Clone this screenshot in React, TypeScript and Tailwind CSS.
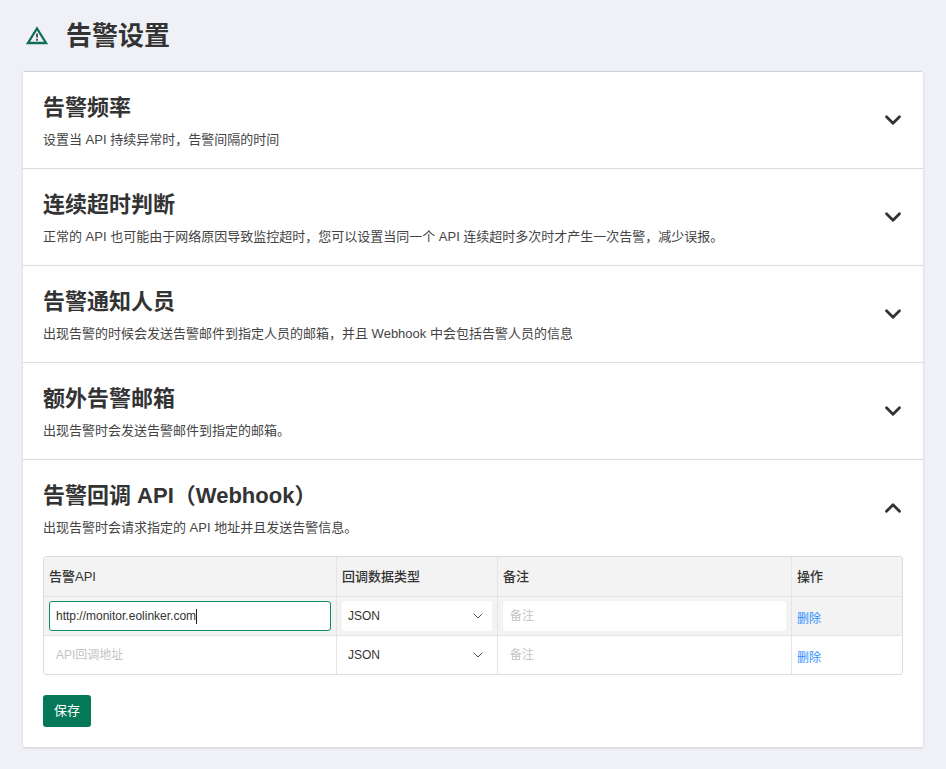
import { ChevronDown, ChevronUp } from 'lucide-react';

const sections = [
  { title: '告警频率', desc: '设置当 API 持续异常时，告警间隔的时间' },
  { title: '连续超时判断', desc: '正常的 API 也可能由于网络原因导致监控超时，您可以设置当同一个 API 连续超时多次时才产生一次告警，减少误报。' },
  { title: '告警通知人员', desc: '出现告警的时候会发送告警邮件到指定人员的邮箱，并且 Webhook 中会包括告警人员的信息' },
  { title: '额外告警邮箱', desc: '出现告警时会发送告警邮件到指定的邮箱。' },
];

const font = 'font-["Liberation_Sans","Noto_Sans_CJK_SC",sans-serif]';

function SelectBox({ filled }: { filled?: boolean }) {
  return (
    <div className={`flex h-[30px] items-center justify-between rounded-[3px] pl-[6px] pr-[6px] text-xs text-[#333] ${filled ? 'bg-white' : ''}`}>
      <span>JSON</span>
      <ChevronDown className="h-[16px] w-[16px] text-[#555]" strokeWidth={1.5} />
    </div>
  );
}

function Row({ active }: { active?: boolean }) {
  return (
    <div className={`flex h-[39px] border-t border-[#e4e4e4] text-xs ${active ? 'bg-[#f3f3f3]' : ''}`}>
      <div className="flex w-[293px] items-center border-r border-[#e4e4e4] px-[5px]">
        {active ? (
          <div className="flex h-[30px] w-full items-center rounded-[3px] border border-[#0e8a66] bg-white px-[6px] text-[#333]">
            <span>http://monitor.eolinker.com</span>
            <span className="h-[15px] w-px bg-[#222]" />
          </div>
        ) : (
          <div className="px-[7px] text-[#c4c4c4]">API回调地址</div>
        )}
      </div>
      <div className="w-[161px] border-r border-[#e4e4e4] px-[5px] pt-[4px]">
        <SelectBox filled={active} />
      </div>
      <div className="w-[294px] border-r border-[#e4e4e4] px-[5px] pt-[4px]">
        <div className={`flex h-[30px] items-center rounded-[3px] px-[7px] text-[#c4c4c4] ${active ? 'bg-white' : ''}`}>备注</div>
      </div>
      <div className="flex flex-1 items-center px-[5px] pt-[5px] text-[#2e8fff]">删除</div>
    </div>
  );
}

export default function App() {
  return (
    <div className={`min-h-[769px] bg-[#f0f1f6] px-[23px] pt-[16px] ${font}`}>
      <div className="flex h-[38px] items-center">
        <svg className="ml-[3px] h-[19px] w-[22px]" viewBox="0 0 22 19" fill="none">
          <path d="M11 2.5 L20 17 H2 Z" stroke="#0f6f5c" strokeWidth="2.3" strokeLinejoin="miter" />
          <path d="M11 7.5 V11.5" stroke="#444" strokeWidth="1.8" />
          <path d="M11 12.8 V14.8" stroke="#444" strokeWidth="1.8" />
        </svg>
        <h1 className="ml-[18px] mt-[2px] text-[26px] font-bold text-[#333]">告警设置</h1>
      </div>

      <div className="mt-[17px] w-[900px] rounded-[2px] border-t border-[#d4d4d4] bg-white shadow-[0_1px_3px_rgba(0,0,0,0.15)]">
        {sections.map(s => (
          <div key={s.title} className="flex h-[97px] items-center justify-between border-b border-[#dcdcdc] pl-[20px] pr-[17px]">
            <div className="pt-[2px]">
              <h3 className="text-[22px] font-bold leading-[30px] text-[#333]">{s.title}</h3>
              <p className="mt-[8px] text-[13px] leading-[18px] text-[#444]">{s.desc}</p>
            </div>
            <ChevronDown className="h-[26px] w-[26px] text-[#333]" strokeWidth={2.6} />
          </div>
        ))}

        <div className="px-[20px] pb-[20px]">
          <div className="flex h-[96px] items-center justify-between">
            <div className="pt-[2px]">
              <h3 className="text-[22px] font-bold leading-[30px] text-[#333]">告警回调 API（Webhook）</h3>
              <p className="mt-[8px] text-[13px] leading-[18px] text-[#444]">出现告警时会请求指定的 API 地址并且发送告警信息。</p>
            </div>
            <ChevronUp className="-mr-[3px] h-[26px] w-[26px] text-[#333]" strokeWidth={2.6} />
          </div>

          <div className="overflow-hidden rounded-[3px] border border-[#dcdcdc]">
            <div className="flex h-[39px] bg-[#f3f3f3] text-[13px] font-medium text-[#333]">
              <div className="flex w-[293px] items-center border-r border-[#e4e4e4] px-[5px]">告警API</div>
              <div className="flex w-[161px] items-center border-r border-[#e4e4e4] px-[5px]">回调数据类型</div>
              <div className="flex w-[294px] items-center border-r border-[#e4e4e4] px-[5px]">备注</div>
              <div className="flex flex-1 items-center px-[5px]">操作</div>
            </div>
            <Row active />
            <Row />
          </div>

          <button className="mt-[20px] block h-[32px] w-[48px] rounded-[3px] bg-[#047857] text-[13px] text-white">保存</button>
        </div>
      </div>
    </div>
  );
}
